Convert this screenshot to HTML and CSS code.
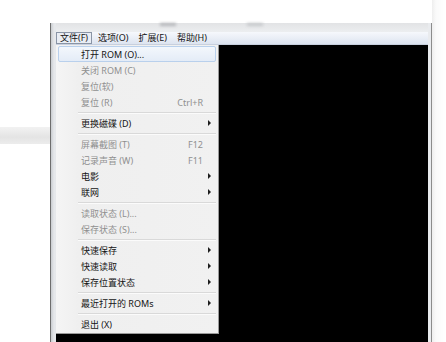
FILE: index.html
```html
<!DOCTYPE html>
<html lang="zh-CN">
<head>
    <meta charset="utf-8">
    <link rel="stylesheet" href="styles.css">
    <title>文件菜单</title>
</head>
<body>
<div class="desktop">
    <div class="side-left">
        <div class="band"></div>
    </div>

    <div class="window">
        <div class="frame-top">
            <span class="blot blot-a"></span>
            <span class="blot blot-b"></span>
        </div>

        <div class="menubar">
            <span class="menubar-item open">文件(F)</span>
            <span class="menubar-item">选项(O)</span>
            <span class="menubar-item">扩展(E)</span>
            <span class="menubar-item">帮助(H)</span>
        </div>

        <div class="client">
            <ul class="dropdown">
                <li class="item hot"><span>打开 ROM (O)...</span></li>
                <li class="item off"><span>关闭 ROM (C)</span></li>
                <li class="item off"><span>复位(软)</span></li>
                <li class="item off"><span>复位 (R)</span><span class="key">Ctrl+R</span></li>
                <li class="sep"></li>
                <li class="item"><span>更换磁碟 (D)</span><span class="arrow"></span></li>
                <li class="sep"></li>
                <li class="item off"><span>屏幕截图 (T)</span><span class="key">F12</span></li>
                <li class="item off"><span>记录声音 (W)</span><span class="key">F11</span></li>
                <li class="item"><span>电影</span><span class="arrow"></span></li>
                <li class="item"><span>联网</span><span class="arrow"></span></li>
                <li class="sep"></li>
                <li class="item off"><span>读取状态 (L)...</span></li>
                <li class="item off"><span>保存状态 (S)...</span></li>
                <li class="sep"></li>
                <li class="item"><span>快速保存</span><span class="arrow"></span></li>
                <li class="item"><span>快速读取</span><span class="arrow"></span></li>
                <li class="item"><span>保存位置状态</span><span class="arrow"></span></li>
                <li class="sep"></li>
                <li class="item"><span>最近打开的 ROMs</span><span class="arrow"></span></li>
                <li class="sep"></li>
                <li class="item"><span>退出 (X)</span></li>
            </ul>
        </div>
    </div>

    <div class="side-right"></div>
</div>
</body>
</html>
```

FILE: styles.css
```css
body {
    margin: 0;
    background-color: white;
    font-family: "Noto Sans", "Noto Sans CJK SC", sans-serif;
    font-size: 9px;
    color: #141414;
}

.desktop {
    display: flex;
    height: 342px;
    overflow: hidden;
}

.side-left {
    width: 50px;
    flex-shrink: 0;
}

.band {
    margin-top: 127px;
    height: 17px;
    background: linear-gradient(#f2f2f2, #e4e4e4 60%, #ececec);
}

.side-right {
    flex: 1;
    background: linear-gradient(90deg, #eeeeee, #fafafa 4px, #ffffff);
}

.window {
    width: 372px;
    margin-top: 23px;
    display: flex;
    flex-direction: column;
    border-left: 1px solid #6e6e6e;
    border-right: 1px solid #8c8c8c;
    padding: 0 3px 0 5px;
    background: linear-gradient(90deg, #c9ccd0, #e6e8eb 3px, #e9ebee);
}

.frame-top {
    position: relative;
    height: 9px;
    background: linear-gradient(#e2e3e5, #eceef0);
}

.blot {
    position: absolute;
    top: 0;
    height: 3px;
    background: #b4b6b9;
    filter: blur(1.5px);
}

.blot-a {
    left: 104px;
    width: 16px;
}

.blot-b {
    left: 191px;
    width: 16px;
    background: #c6c8cb;
}

.menubar {
    height: 12px;
    display: flex;
    align-items: center;
    gap: 2px;
    background: linear-gradient(#f6f8fc, #dde4f0);
    border-bottom: 1px solid #c8d0de;
}

.menubar-item {
    padding: 0 3px;
    line-height: 10px;
    border: 1px solid transparent;
}

.menubar-item.open {
    border-color: #8a95a6;
    background: #e9edf4;
    padding: 0 3px;
}

.client {
    position: relative;
    flex: 1;
    background-color: black;
}

.dropdown {
    position: absolute;
    left: 0;
    top: 0;
    width: 160px;
    margin: 0;
    padding: 1px;
    list-style-type: none;
    background: linear-gradient(90deg, #f5f5f5, #efefef 22px, #f1f1f1);
    border-right: 1px solid #9a9a9a;
    border-bottom: 1px solid #9a9a9a;
}

.item {
    height: 16px;
    display: grid;
    grid-template-columns: 1fr auto 12px;
    align-items: center;
    padding-left: 24px;
    padding-right: 2px;
}

.item span:first-child {
    grid-column: 1;
}

.key {
    grid-column: 2;
}

.arrow {
    grid-column: 3;
    justify-self: center;
    width: 0;
    height: 0;
    border-top: 3px solid transparent;
    border-bottom: 3px solid transparent;
    border-left: 3px solid #1e1e1e;
}

.off {
    color: #8f8f8f;
}

.hot {
    height: 14px;
    margin: 0 1px;
    padding-left: 22px;
    border: 1px solid #b9d0ec;
    border-radius: 2px;
    background: linear-gradient(#f3f7fc, #e4ecf7);
}

.sep {
    height: 5px;
    margin-left: 21px;
    margin-right: 1px;
    display: flex;
    flex-direction: column;
    justify-content: center;
}

.sep::before {
    content: "";
    height: 1px;
    background-color: #d9d9d9;
    border-bottom: 1px solid #fbfbfb;
}
```
